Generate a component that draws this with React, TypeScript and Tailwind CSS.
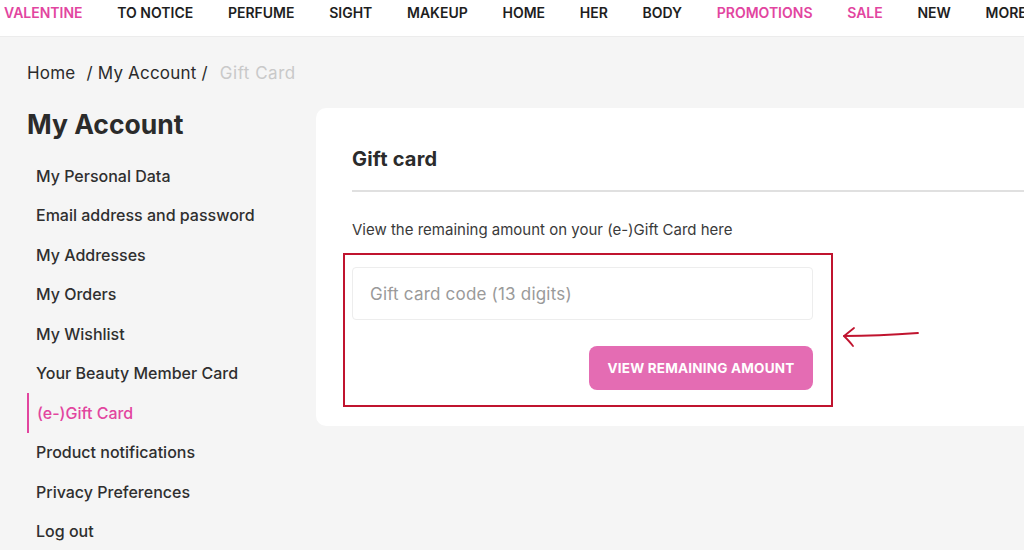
import React from 'react'

//////////
//■[ Top navigation items ]
const navItems = [
    { label: 'VALENTINE', pink: true },
    { label: 'TO NOTICE' },
    { label: 'PERFUME' },
    { label: 'SIGHT' },
    { label: 'MAKEUP' },
    { label: 'HOME' },
    { label: 'HER' },
    { label: 'BODY' },
    { label: 'PROMOTIONS', pink: true },
    { label: 'SALE', pink: true },
    { label: 'NEW' },
    { label: 'MORE' },
]

//////////
//■[ Account menu ]
const menuItems = [
    'My Personal Data',
    'Email address and password',
    'My Addresses',
    'My Orders',
    'My Wishlist',
    'Your Beauty Member Card',
    '(e-)Gift Card',
    'Product notifications',
    'Privacy Preferences',
    'Log out',
]

export default function App() {
    return (
        <div className="w-[1024px] h-[550px] overflow-hidden bg-[#f5f5f5] font-['Inter','Liberation_Sans',sans-serif] text-[#2b2b2b]">

            {/* Top navigation */}
            <nav className="h-[37px] bg-white border-b border-[#ececec] flex items-start pt-[5px] gap-[34.7px] pl-[4px] whitespace-nowrap overflow-hidden">
                {navItems.map((item) => (
                    <a
                        key={item.label}
                        className={`text-[14px] leading-[16px] font-semibold ${item.pink ? 'text-[#e2459f]' : 'text-[#1e1e1e]'}`}
                    >
                        {item.label}
                    </a>
                ))}
            </nav>

            {/* Breadcrumb */}
            <div className="pl-[27px] pt-[24px] text-[17px] leading-[24px] flex items-center tracking-[0.2px]">
                <span className="text-[#2b2b2b]">Home</span>
                <span className="text-[#2b2b2b] ml-[11px]">/ My Account /</span>
                <span className="text-[#c9c9c9] ml-[12px] tracking-[0.5px]">Gift Card</span>
            </div>

            <div className="flex mt-[23px]">

                {/* Sidebar */}
                <aside className="w-[316px] shrink-0 pl-[27px]">
                    <h1 className="text-[26.5px] font-bold leading-[32px] text-[#2b2b2b]">My Account</h1>
                    <ul className="mt-[16px]">
                        {menuItems.map((item) => {
                            const active = item === '(e-)Gift Card'
                            return (
                                <li
                                    key={item}
                                    className={`h-[39.5px] flex items-center text-[16px] font-medium ${active ? 'border-l-2 border-[#e2459f] text-[#e2459f] pl-[8px]' : 'pl-[9px] text-[#2f2f2f]'}`}
                                >
                                    {item}
                                </li>
                            )
                        })}
                    </ul>
                </aside>

                {/* Gift card panel */}
                <section className="flex-1 bg-white rounded-l-[10px] h-[318px] pl-[36px] pt-[38px]">
                    <h2 className="text-[20px] font-bold text-[#2b2b2b] leading-[26px] tracking-[0.2px]">Gift card</h2>
                    <div className="h-[2px] bg-[#e0e0e0] mt-[18px]" />
                    <p className="text-[15px] text-[#3a3a3a] mt-[28px] leading-[20px]">View the remaining amount on your (e-)Gift Card here</p>

                    <div className="flex items-center mt-[13px]">
                        <div className="-ml-[9px] w-[490px] h-[154px] border-2 border-[#c0142f] pl-[7px] pt-[12px]">
                            <input
                                placeholder="Gift card code (13 digits)"
                                className="w-[461px] h-[53px] border border-[#ededed] rounded-[4px] px-[17px] text-[17px] tracking-[0.2px] placeholder:text-[#9a9a9a] outline-none"
                            />
                            <div className="flex justify-end w-[461px] mt-[26px]">
                                <button className="w-[224px] h-[44px] rounded-[8px] bg-[#e46cb3] text-white text-[13.5px] font-bold tracking-[0.2px]">
                                    VIEW REMAINING AMOUNT
                                </button>
                            </div>
                        </div>

                        {/* hand drawn arrow */}
                        <svg className="ml-[8px] mt-[14px]" width="80" height="22" viewBox="0 0 80 22" fill="none">
                            <path d="M3 10 C 25 10, 50 9, 77 7" stroke="#c0142f" strokeWidth="1.8" strokeLinecap="round" />
                            <path d="M13 2 C 9 5, 6 8, 3 10 C 6 13, 9 16, 12 20" stroke="#c0142f" strokeWidth="1.8" strokeLinecap="round" strokeLinejoin="round" />
                        </svg>
                    </div>
                </section>
            </div>
        </div>
    )
}
